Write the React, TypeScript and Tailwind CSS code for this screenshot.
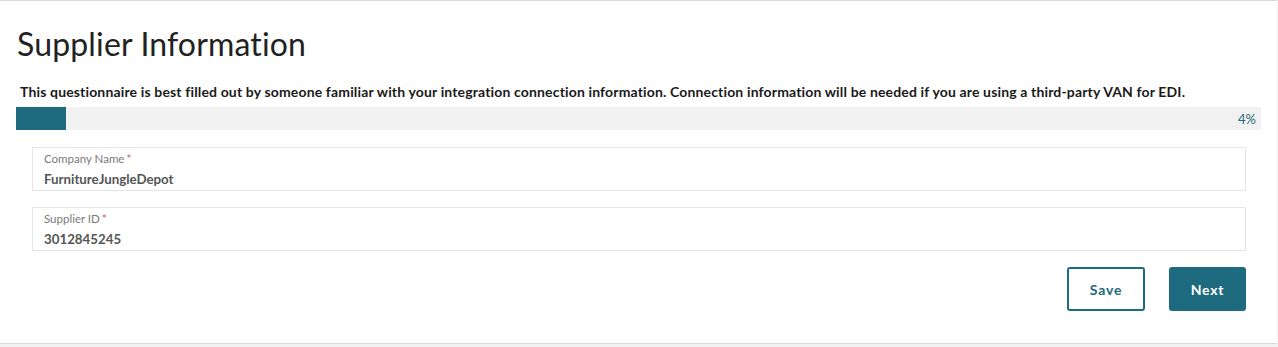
import React from "react";

function Field({ label, value }: { label: string; value: string }) {
  return (
    <div className="flex h-[44px] flex-col border border-[#e6e6e6] bg-white pl-[11px] pt-[3px]">
      <div className="flex text-[11.5px] leading-[16px] text-[#7a7a7a]">
        {label}
        <span className="ml-[2px] text-[#d9534f]">*</span>
      </div>
      <div className="mt-[4px] text-[13.3px] font-bold leading-[16px] text-[#555]">{value}</div>
    </div>
  );
}

export default function App() {
  return (
    <div className="h-[347px] w-[1278px] bg-[#f2f2f2] font-['Lato',sans-serif]">
      <div className="flex h-[344px] w-[1277px] flex-col border-t border-b border-[#d9d9d9] bg-white">
        <h1 className="ml-[17px] mt-[23px] text-[32px] font-normal leading-[40px] tracking-[0.15px] text-[#222]">
          Supplier Information
        </h1>
        <p className="ml-[20px] mt-[20px] text-[14px] font-bold leading-[16px] tracking-[0.15px] text-[#1a1a1a]">
          This questionnaire is best filled out by someone familiar with your integration connection information. Connection information will be needed if you are using a third-party VAN for EDI.
        </p>
        <div className="mx-[16px] mt-[7px] flex h-[23px] items-center justify-between bg-[#f1f1f1]">
          <div className="h-full w-[50px] bg-[#1e6a7e]" />
          <span className="mr-[5px] mt-[3px] text-[13px] text-[#1e6a7e]">4%</span>
        </div>
        <div className="ml-[32px] mr-[31px] mt-[17px] flex flex-col gap-[16px]">
          <Field label="Company Name" value="FurnitureJungleDepot" />
          <Field label="Supplier ID" value="3012845245" />
        </div>
        <div className="mr-[31px] mt-[16px] flex justify-end gap-[24px]">
          <button className="h-[44px] w-[78px] rounded-[3px] border-2 border-[#1e6a7e] bg-white text-[14px] font-bold tracking-[0.8px] text-[#1e6a7e]">
            Save
          </button>
          <button className="h-[44px] w-[77px] rounded-[3px] bg-[#1e6a7e] text-[14px] font-bold tracking-[0.8px] text-white">
            Next
          </button>
        </div>
      </div>
    </div>
  );
}
